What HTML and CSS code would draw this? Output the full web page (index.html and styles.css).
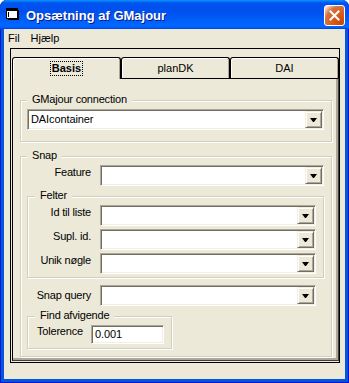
FILE: index.html
```html
<!DOCTYPE html>
<html lang="da">
<head>
<meta charset="utf-8">
<title>Opsætning af GMajour</title>
<link rel="stylesheet" href="styles.css">
</head>
<body>
<div class="window">
  <div class="titlebar">
    <svg class="app-icon" width="13" height="12" viewBox="0 0 13 12" shape-rendering="crispEdges">
      <rect x="0.5" y="0.5" width="11" height="10" fill="#fff" stroke="#000"/>
      <rect x="0" y="0" width="12" height="3" fill="#000"/>
      <rect x="2" y="4" width="1" height="5" fill="#000"/>
      <rect x="12" y="2" width="1" height="10" fill="#000"/>
      <rect x="2" y="11" width="11" height="1" fill="#000"/>
    </svg>
    <span class="title">Opsætning af GMajour</span>
    <div class="close">
      <svg width="11" height="11" viewBox="0 0 11 11">
        <path d="M1.5 1.5 L9.5 9.5 M9.5 1.5 L1.5 9.5" stroke="#fff" stroke-width="2" stroke-linecap="square"/>
      </svg>
    </div>
  </div>
  <div class="client">
    <div class="menubar">
      <span class="menu first">Fil</span>
      <span class="menu">Hjælp</span>
    </div>
    <div class="frame">
      <div class="tabs">
        <div class="tab selected"><span class="focus">Basis</span></div>
        <div class="tab">planDK</div>
        <div class="tab">DAI</div>
      </div>
      <div class="panel">
        <div class="group g-conn">
          <div class="legend">GMajour connection</div>
          <div class="combo w297 conn-combo"><div class="combo-text">DAIcontainer</div><div class="drop"></div></div>
        </div>
        <div class="group g-snap">
          <div class="legend">Snap</div>
          <div class="row first-row">
            <div class="lbl l70">Feature</div>
            <div class="combo w224"><div class="combo-text"></div><div class="drop"></div></div>
          </div>
          <div class="group g-felter">
            <div class="legend">Felter</div>
            <div class="row first-row">
              <div class="lbl l63">Id til liste</div>
              <div class="combo w216"><div class="combo-text"></div><div class="drop"></div></div>
            </div>
            <div class="row next-row">
              <div class="lbl l63">Supl. id.</div>
              <div class="combo w216"><div class="combo-text"></div><div class="drop"></div></div>
            </div>
            <div class="row next-row">
              <div class="lbl l63">Unik nøgle</div>
              <div class="combo w216"><div class="combo-text"></div><div class="drop"></div></div>
            </div>
          </div>
          <div class="row snapq">
            <div class="lbl l70 lbl-low">Snap query</div>
            <div class="combo w216"><div class="combo-text"></div><div class="drop"></div></div>
          </div>
          <div class="group g-find">
            <div class="legend">Find afvigende</div>
            <div class="row first-row">
              <div class="lbl-left">Tolerence</div>
              <div class="textbox">0.001</div>
            </div>
          </div>
        </div>
      </div>
    </div>
  </div>
</div>
</body>
</html>
```
FILE: styles.css
```css
* { box-sizing: border-box; }

html, body {
  margin: 0;
  padding: 0;
  background: #ffffff;
}

body {
  width: 349px;
  height: 383px;
  font-family: "Liberation Sans", Arial, sans-serif;
  font-size: 11px;
  color: #000;
  overflow: hidden;
}

.window {
  width: 349px;
  height: 383px;
  display: flex;
  flex-direction: column;
  background: #0855dd;
  border-radius: 7px 7px 0 0;
  box-shadow: inset 1px 0 0 #0019cf, inset -1px 0 0 #0019cf, inset 0 -1px 0 #0019cf;
  overflow: hidden;
}

/* ---------- title bar ---------- */
.titlebar {
  height: 29px;
  flex: none;
  display: flex;
  align-items: flex-start;
  padding-left: 6px;
  background: linear-gradient(to bottom,
    #0997ff 0%, #0053ee 10%, #0050ee 40%, #0066ff 85%, #0066ff 92%, #005bff 95%, #003dd7 100%);
  border-radius: 7px 7px 0 0;
}

.app-icon {
  margin-top: 8px;
  flex: none;
}

.title {
  margin-left: 7px;
  margin-top: 8px;
  font-family: "Liberation Sans", Arial, sans-serif;
  font-weight: bold;
  font-size: 13px;
  line-height: 15px;
  color: #fff;
  text-shadow: 1px 1px 0 #0a1883;
  flex: 1;
}

.close {
  width: 21px;
  height: 21px;
  margin-top: 5px;
  margin-right: 4px;
  flex: none;
  border: 1px solid #fff;
  border-radius: 3px;
  background: radial-gradient(circle at 90% 90%, #cc4600 0%, #dc6527 55%, #cd7546 70%, #ffccb2 90%, #ffffff 100%);
  display: flex;
  align-items: center;
  justify-content: center;
}

/* ---------- client ---------- */
.client {
  flex: 1;
  margin: 0 4px 4px 4px;
  background: #ece9d8;
}

.menubar {
  height: 19px;
  display: flex;
  align-items: center;
  line-height: 19px;
  font-size: 11px;
}

.menu {
  padding: 0 5px;
}

.menu.first {
  margin-left: -1px;
  margin-right: 1px;
}

.frame {
  margin-left: 6px;
  width: 330px;
  height: 315px;
  border: 1px solid #000;
  padding: 8px 0 0 1px;
}

/* ---------- tabs ---------- */
.tabs {
  display: flex;
  height: 21px;
  align-items: flex-start;
}

.tab {
  width: 109px;
  height: 21px;
  border: 1px solid #000;
  border-bottom: none;
  border-radius: 3px 3px 0 0;
  background: #ece9d8;
  box-shadow: inset 1px 1px 0 #fff, inset -1px 0 0 #aca899;
  text-align: center;
  padding-top: 4px;
  line-height: 13px;
  font-size: 11px;
}

.tab.selected {
  height: 22px;
  margin-bottom: -1px;
  position: relative;
  z-index: 1;
  font-weight: bold;
}

.focus {
  display: inline-block;
  padding: 0 1px;
  line-height: 13px;
  outline: 1px dotted #000;
}

.panel {
  width: 327px;
  height: 283px;
  border-top: 1px solid #000;
  border-left: 1px solid #000;
  border-right: 1px solid #404040;
  border-bottom: 1px solid #404040;
  box-shadow: inset -2px -2px 0 #aca899;
  padding-left: 7px;
  display: flex;
  flex-direction: column;
  align-items: flex-start;
}

/* ---------- group boxes ---------- */
.group {
  border: 1px solid #d0d0bf;
  box-shadow: 1px 1px 0 #fff, inset 1px 1px 0 #fff;
  display: flex;
  flex-direction: column;
  align-items: flex-start;
  letter-spacing: -0.2px;
}

.legend {
  margin: -8px 0 0 6px;
  padding: 0 5px;
  line-height: 13px;
  background: #ece9d8;
}

.g-conn {
  margin-top: 21px;
  width: 312px;
  padding: 0 0 11px 0;
}

.conn-combo {
  margin: 3px 0 0 6px;
}

.g-snap {
  margin-top: 14px;
  width: 312px;
  padding-bottom: 7px;
}

.g-felter {
  margin: 10px 0 0 6px;
  width: 297px;
  padding-bottom: 3px;
}

.g-felter .legend,
.g-find .legend {
  margin-left: 7px;
}

.g-find {
  margin: 10px 0 0 6px;
  width: 145px;
  padding-bottom: 4px;
}

/* ---------- rows ---------- */
.row {
  display: flex;
  align-items: flex-start;
}

.first-row { margin-top: 3px; }
.next-row { margin-top: 3px; }
.snapq { margin-top: 7px; }

.lbl {
  text-align: right;
  line-height: 13px;
  margin-top: 1px;
  margin-right: 9px;
  flex: none;
}

.lbl-low { margin-top: 4px; }

.l70 { width: 70px; }
.l63 { width: 63px; }

.lbl-left {
  margin-left: 9px;
  width: 54px;
  line-height: 13px;
  flex: none;
}

/* ---------- controls ---------- */
.combo,
.textbox {
  height: 21px;
  border: 1px solid;
  border-color: #aca899 #fff #fff #aca899;
  padding: 1px;
  background: #fff;
  box-shadow: inset 1px 1px 0 #716f64, inset -1px -1px 0 #f1efe2;
  display: flex;
  flex: none;
}

.w297 { width: 297px; }
.w224 { width: 224px; }
.w216 { width: 216px; }

.combo-text {
  flex: 1;
  padding: 1px 0 0 2px;
  line-height: 15px;
  letter-spacing: -0.1px;
}

.drop {
  width: 17px;
  height: 17px;
  flex: none;
  background: #ece9d8;
  border: 1px solid;
  border-color: #f1efe2 #716f64 #716f64 #f1efe2;
  box-shadow: inset 1px 1px 0 #fff, inset -1px -1px 0 #aca899;
  display: flex;
  align-items: center;
  justify-content: center;
}

.drop::after {
  content: "";
  display: block;
  width: 7px;
  height: 4px;
  margin-top: 1px;
  background: #000;
  clip-path: polygon(0 0, 7px 0, 4px 4px, 3px 4px);
}

.textbox {
  width: 73px;
  height: 19px;
  padding: 1px 0 0 3px;
  line-height: 15px;
  letter-spacing: -0.1px;
}
```
